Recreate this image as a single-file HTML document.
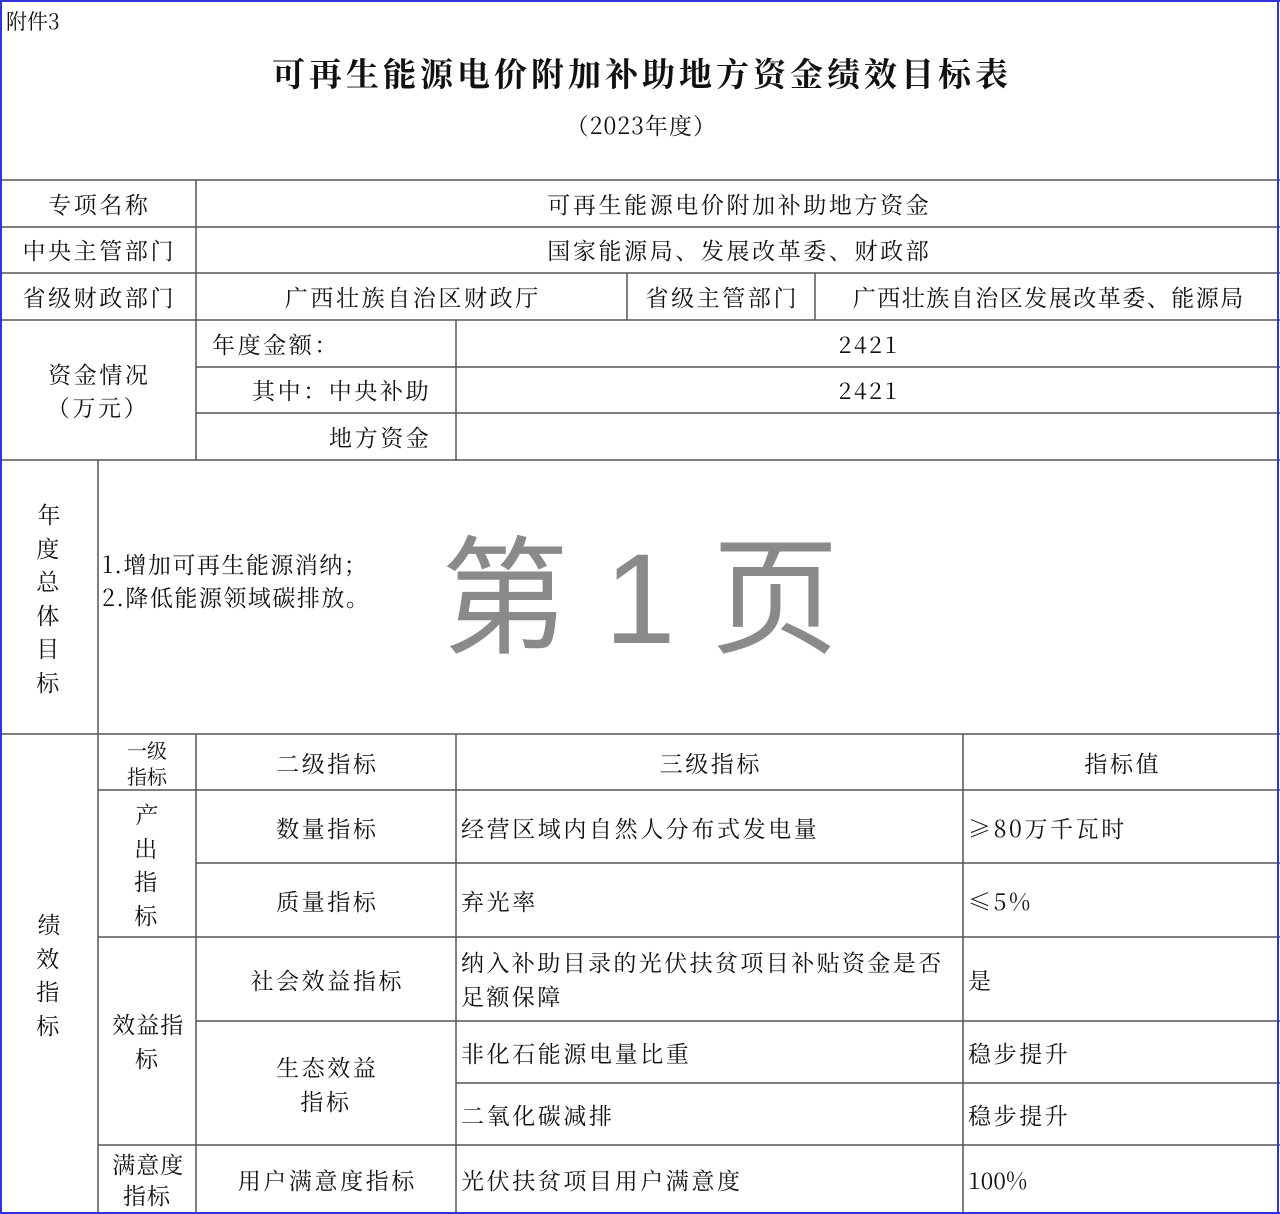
<!DOCTYPE html>
<html><head><meta charset="utf-8"><style>
body{margin:0;width:1280px;height:1214px;background:#fff;position:relative;overflow:hidden;font-family:"Noto Serif CJK SC","Liberation Serif",serif;color:#111}
.t{position:absolute;font-size:23px;line-height:34px;white-space:nowrap;letter-spacing:2.6px}
.c{text-align:center;text-indent:2.6px}
svg{position:absolute;left:0;top:0}
</style></head><body>
<svg width="1280" height="1214">
<g stroke="#555" stroke-width="1.5" fill="none">
<line x1="0" y1="180" x2="1280" y2="180"/>
<line x1="0" y1="227" x2="1280" y2="227"/>
<line x1="0" y1="273" x2="1280" y2="273"/>
<line x1="0" y1="320" x2="1280" y2="320"/>
<line x1="196" y1="367" x2="1280" y2="367"/>
<line x1="196" y1="413" x2="1280" y2="413"/>
<line x1="0" y1="460" x2="1280" y2="460"/>
<line x1="0" y1="734" x2="1280" y2="734"/>
<line x1="98" y1="790" x2="1280" y2="790"/>
<line x1="196" y1="863" x2="1280" y2="863"/>
<line x1="98" y1="937" x2="1280" y2="937"/>
<line x1="196" y1="1021" x2="1280" y2="1021"/>
<line x1="456" y1="1083" x2="1280" y2="1083"/>
<line x1="98" y1="1145" x2="1280" y2="1145"/>
<line x1="196" y1="180" x2="196" y2="460"/>
<line x1="98" y1="460" x2="98" y2="1214"/>
<line x1="196" y1="734" x2="196" y2="1214"/>
<line x1="456" y1="320" x2="456" y2="460"/>
<line x1="456" y1="734" x2="456" y2="1214"/>
<line x1="627" y1="273" x2="627" y2="320"/>
<line x1="815" y1="273" x2="815" y2="320"/>
<line x1="963" y1="734" x2="963" y2="1214"/>
</g>
<g stroke="#3333dd" stroke-width="2" fill="none">
<line x1="1" y1="0" x2="1" y2="1214"/>
<line x1="0" y1="1" x2="1280" y2="1"/>
<line x1="1278" y1="0" x2="1278" y2="1214"/>
<line x1="0" y1="1213" x2="1280" y2="1213"/>
</g>
</svg>
<div class="t" style="left:6px;top:4px;font-size:21px;letter-spacing:0">附件3</div>
<div class="t c" style="left:0;width:1280px;top:52px;font-size:33px;font-weight:bold;line-height:42px;letter-spacing:4px;text-indent:4px">可再生能源电价附加补助地方资金绩效目标表</div>
<div class="t c" style="left:0;width:1280px;top:108px;font-size:23px;letter-spacing:1px">（2023年度）</div>

<div class="t c" style="left:0;width:196px;top:187px">专项名称</div>
<div class="t c" style="left:196px;width:1084px;top:187px">可再生能源电价附加补助地方资金</div>
<div class="t c" style="left:0;width:196px;top:233px">中央主管部门</div>
<div class="t c" style="left:196px;width:1084px;top:233px">国家能源局、发展改革委、财政部</div>
<div class="t c" style="left:0;width:196px;top:280px">省级财政部门</div>
<div class="t c" style="left:196px;width:431px;top:280px">广西壮族自治区财政厅</div>
<div class="t c" style="left:627px;width:188px;top:280px">省级主管部门</div>
<div class="t c" style="left:815px;width:465px;top:280px;letter-spacing:1.5px">广西壮族自治区发展改革委、能源局</div>
<div class="t c" style="left:0;width:196px;top:357px;line-height:33px">资金情况<br>（万元）</div>
<div class="t" style="left:212px;top:327px">年度金额：</div>
<div class="t c" style="left:456px;width:824px;top:327px">2421</div>
<div class="t" style="left:252px;top:373px">其中：中央补助</div>
<div class="t c" style="left:456px;width:824px;top:373px">2421</div>
<div class="t" style="left:329px;top:420px">地方资金</div>

<div class="t c" style="left:0;width:98px;top:497px;line-height:33.6px">年<br>度<br>总<br>体<br>目<br>标</div>
<div class="t" style="left:102px;top:547px;line-height:33px;letter-spacing:1.5px">1.增加可再生能源消纳；<br>2.降低能源领域碳排放。</div>
<div class="t c" style="left:0;width:1280px;top:525px;font-size:128px;line-height:150px;color:#8a8a8a;letter-spacing:0;text-indent:0;font-family:'Liberation Sans','Noto Sans CJK SC',sans-serif">第 1 页</div>

<div class="t c" style="left:0;width:98px;top:907px;line-height:33.6px">绩<br>效<br>指<br>标</div>
<div class="t c" style="left:98px;width:98px;top:737px;font-size:20px;line-height:26px;letter-spacing:0;text-indent:0">一级<br>指标</div>
<div class="t c" style="left:196px;width:260px;top:746px">二级指标</div>
<div class="t c" style="left:456px;width:507px;top:746px">三级指标</div>
<div class="t c" style="left:963px;width:317px;top:746px">指标值</div>
<div class="t c" style="left:98px;width:98px;top:797px;line-height:33.6px">产<br>出<br>指<br>标</div>
<div class="t c" style="left:196px;width:260px;top:811px">数量指标</div>
<div class="t" style="left:461px;top:811px">经营区域内自然人分布式发电量</div>
<div class="t" style="left:968px;top:811px">≥80万千瓦时</div>
<div class="t c" style="left:196px;width:260px;top:884px">质量指标</div>
<div class="t" style="left:461px;top:884px">弃光率</div>
<div class="t" style="left:968px;top:884px">≤5%</div>
<div class="t c" style="left:98px;width:98px;top:1007px;line-height:33.6px;letter-spacing:1px">效益指<br>标</div>
<div class="t c" style="left:196px;width:260px;top:963px">社会效益指标</div>
<div class="t" style="left:461px;top:945px;line-height:33.6px;letter-spacing:2.4px">纳入补助目录的光伏扶贫项目补贴资金是否<br>足额保障</div>
<div class="t" style="left:968px;top:963px">是</div>
<div class="t c" style="left:196px;width:260px;top:1050px;line-height:33.6px">生态效益<br>指标</div>
<div class="t" style="left:461px;top:1036px">非化石能源电量比重</div>
<div class="t" style="left:968px;top:1036px">稳步提升</div>
<div class="t" style="left:461px;top:1098px">二氧化碳减排</div>
<div class="t" style="left:968px;top:1098px">稳步提升</div>
<div class="t c" style="left:98px;width:98px;top:1148px;line-height:31px;letter-spacing:1px">满意度<br>指标</div>
<div class="t c" style="left:196px;width:260px;top:1163px">用户满意度指标</div>
<div class="t" style="left:461px;top:1163px">光伏扶贫项目用户满意度</div>
<div class="t" style="left:968px;top:1163px;letter-spacing:0">100%</div>
</body></html>
